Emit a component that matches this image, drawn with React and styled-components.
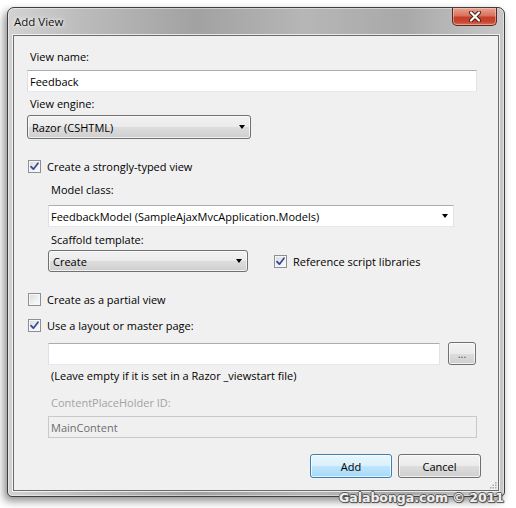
import React from "react";
import styled, { createGlobalStyle } from "styled-components";

const GlobalStyle = createGlobalStyle`
	html, body {
		margin: 0;
		padding: 0;
		background: #fff;
	}
	body {
		font-family: "Open Sans", "Noto Sans", sans-serif;
		font-size: 11px;
		color: #000;
	}
`;

const Stage = styled.div`
	position: relative;
	width: 516px;
	height: 508px;
	box-sizing: border-box;
	padding: 7px 0 0 7px;
	overflow: hidden;
`;

const Window = styled.div`
	width: 498px;
	height: 490px;
	box-sizing: border-box;
	display: flex;
	flex-direction: column;
	border: 1px solid #3f3f3f;
	border-radius: 7px 7px 5px 5px;
	background:
		linear-gradient(to right, rgba(255, 255, 255, 0.45) 0%, rgba(255, 255, 255, 0.15) 16%, rgba(0, 0, 0, 0.07) 38%, rgba(255, 255, 255, 0.1) 60%, rgba(0, 0, 0, 0.03) 80%, rgba(255, 255, 255, 0.32) 100%),
		#aeaeae;
	box-shadow:
		inset 0 0 0 1px rgba(255, 255, 255, 0.45),
		-3px 4px 8px rgba(0, 0, 0, 0.45);
`;

const TitleBar = styled.div`
	height: 27px;
	flex-shrink: 0;
	display: flex;
	justify-content: space-between;
	align-items: flex-start;
	padding: 0 7px 0 6px;
`;

const Title = styled.span`
	align-self: center;
	font-size: 11.5px;
	line-height: 16px;
	color: #111;
	text-shadow: 0 0 6px rgba(255, 255, 255, 0.9), 0 0 3px rgba(255, 255, 255, 0.9);
`;

const CloseButton = styled.div`
	width: 45px;
	height: 18px;
	box-sizing: border-box;
	display: flex;
	align-items: center;
	justify-content: center;
	border: 1px solid #5a2a22;
	border-top: none;
	border-radius: 0 0 5px 5px;
	background: linear-gradient(to bottom, #e8a493 0%, #d9725b 45%, #c4402a 55%, #c7442d 80%, #d7705a 100%);
	box-shadow: inset 0 0 0 1px rgba(255, 220, 210, 0.45);
`;

const Client = styled.div`
	position: relative;
	flex: 1;
	margin: 0 5px 5px;
	border: 1px solid #6c6c6c;
	box-shadow: 0 0 0 1px rgba(255, 255, 255, 0.75);
	background: #f0f0f0;
	padding: 13px 17px 0 13px;
	display: flex;
	flex-direction: column;
	align-items: flex-start;
`;

const Label = styled.div`
	margin-top: ${(p) => p.$gap || 0}px;
	padding-left: ${(p) => (p.$indent || 0) + 3}px;
	line-height: 16px;
	color: ${(p) => (p.$muted ? "#a3a3a3" : "#000")};
	white-space: nowrap;
`;

const TextBox = styled.div`
	position: relative;
	margin-top: ${(p) => p.$gap || 0}px;
	margin-left: ${(p) => p.$indent || 0}px;
	width: ${(p) => p.$w}px;
	height: 22px;
	box-sizing: border-box;
	display: flex;
	align-items: center;
	padding-left: 2px;
	border: 1px solid;
	border-color: ${(p) => (p.$disabled ? "#c9c9c9" : "#abadb3 #e2e3ea #e3e9ef #dbdfe6")};
	background: ${(p) => (p.$disabled ? "#f0f0f0" : "#fff")};
	color: ${(p) => (p.$disabled ? "#6d6d6d" : "#000")};
	white-space: nowrap;
`;

const DropDown = styled.div`
	position: relative;
	margin-top: ${(p) => p.$gap || 0}px;
	margin-left: ${(p) => p.$indent || 0}px;
	width: ${(p) => p.$w}px;
	height: ${(p) => p.$h || 22}px;
	box-sizing: border-box;
	display: flex;
	align-items: center;
	padding-left: 4px;
	border: 1px solid #707070;
	border-radius: 3px;
	background: linear-gradient(to bottom, #f2f2f2 0%, #ebebeb 50%, #dddddd 51%, #cfcfcf 100%);
	box-shadow: inset 0 0 0 1px rgba(255, 255, 255, 0.7);
	flex-shrink: 0;
`;

const Arrow = styled.span`
	position: absolute;
	right: 5px;
	top: 50%;
	margin-top: -2px;
	width: 0;
	height: 0;
	border-left: 3.5px solid transparent;
	border-right: 3.5px solid transparent;
	border-top: 4px solid #000;
`;

const CheckRow = styled.div`
	display: flex;
	align-items: center;
	gap: 6px;
	margin-top: ${(p) => p.$gap || 0}px;
	margin-left: ${(p) => p.$indent || 1}px;
	height: 16px;
	white-space: nowrap;
`;

const Box = styled.span`
	width: 13px;
	height: 13px;
	box-sizing: border-box;
	border: 1px solid #8e8f8f;
	background: linear-gradient(135deg, #d6d9de 0%, #f0f1f3 60%, #fbfbfb 100%);
	box-shadow: inset 0 0 0 1px #f7f7f7;
	display: flex;
	align-items: center;
	justify-content: center;
	flex-shrink: 0;
`;

const Row = styled.div`
	display: flex;
	align-items: center;
	margin-top: ${(p) => p.$gap || 0}px;
	margin-left: ${(p) => p.$indent || 0}px;
	gap: ${(p) => p.$spacing || 0}px;
`;

const ButtonRow = styled.div`
	align-self: flex-end;
	display: flex;
	gap: 6px;
	margin-top: 16px;
`;

const Button = styled.div`
	width: ${(p) => p.$w}px;
	height: ${(p) => p.$h || 24}px;
	box-sizing: border-box;
	display: flex;
	align-items: center;
	justify-content: center;
	border: 1px solid ${(p) => (p.$primary ? "#3c7fb1" : "#707070")};
	border-radius: 3px;
	background: ${(p) =>
		p.$primary
			? "linear-gradient(to bottom, #eaf6fd 0%, #d9f0fc 50%, #bee6fd 51%, #a7d9f5 100%)"
			: "linear-gradient(to bottom, #f2f2f2 0%, #ebebeb 50%, #dddddd 51%, #cfcfcf 100%)"};
	box-shadow: inset 0 0 0 1px rgba(255, 255, 255, 0.7);
	color: ${(p) => (p.$faint ? "#555" : "#000")};
	flex-shrink: 0;
`;

const Grip = styled.svg`
	position: absolute;
	right: 1px;
	bottom: 1px;
`;

const Watermark = styled.div`
	position: absolute;
	right: 12px;
	bottom: 2px;
	font-family: "DejaVu Sans", Verdana, sans-serif;
	font-weight: bold;
	font-size: 12.5px;
	line-height: 16px;
	color: #eeeeee;
	text-shadow:
		1px 0 0 #5a5a5a, -1px 0 0 #5a5a5a, 0 1px 0 #5a5a5a, 0 -1px 0 #5a5a5a,
		1px 1px 1px #444;
`;

function Check({ checked }) {
	return (
		<Box>
			{checked && (
				<svg width="9" height="9" viewBox="0 0 9 9">
					<path d="M1 4.6 L3.4 7.2 L8 1.2" fill="none" stroke="#34489a" strokeWidth="1.7" strokeLinejoin="round" strokeLinecap="round" />
				</svg>
			)}
		</Box>
	);
}

export default function App() {
	return (
		<>
			<GlobalStyle />
			<Stage>
				<Window>
					<TitleBar>
						<Title>Add View</Title>
						<CloseButton>
							<svg width="14" height="11" viewBox="0 0 14 11">
								<path d="M3 1.5 L11 9.5 M11 1.5 L3 9.5" stroke="#4a1a14" strokeWidth="4" strokeLinecap="round" />
								<path d="M3 1.5 L11 9.5 M11 1.5 L3 9.5" stroke="#fff" strokeWidth="2.2" strokeLinecap="round" />
							</svg>
						</CloseButton>
					</TitleBar>

					<Client>
						<Label>View name:</Label>
						<TextBox $gap={5} $w={450}>Feedback</TextBox>

						<Label $gap={4}>View engine:</Label>
						<DropDown $gap={3} $w={224} $h={24}>
							Razor (CSHTML)
							<Arrow />
						</DropDown>

						<CheckRow $gap={19}>
							<Check checked />
							Create a strongly-typed view
						</CheckRow>

						<Label $gap={8} $indent={21}>Model class:</Label>
						<TextBox $gap={7} $indent={21} $w={406}>
							FeedbackModel (SampleAjaxMvcApplication.Models)
							<Arrow />
						</TextBox>

						<Label $gap={5} $indent={21}>Scaffold template:</Label>
						<Row $gap={2} $indent={21} $spacing={25}>
							<DropDown $w={200}>
								Create
								<Arrow />
							</DropDown>
							<CheckRow $indent={0}>
								<Check checked />
								Reference script libraries
							</CheckRow>
						</Row>

						<CheckRow $gap={19}>
							<Check />
							Create as a partial view
						</CheckRow>
						<CheckRow $gap={10}>
							<Check checked />
							Use a layout or master page:
						</CheckRow>

						<Row $gap={9} $indent={21} $spacing={8}>
							<TextBox $w={392} />
							<Button $w={28} $h={23} $faint>
								...
							</Button>
						</Row>

						<Label $gap={3} $indent={21}>(Leave empty if it is set in a Razor _viewstart file)</Label>

						<Label $gap={11} $indent={21} $muted>
							ContentPlaceHolder ID:
						</Label>
						<TextBox $gap={5} $indent={21} $w={429} $disabled>
							MainContent
						</TextBox>

						<ButtonRow>
							<Button $w={82} $primary>
								Add
							</Button>
							<Button $w={83}>Cancel</Button>
						</ButtonRow>

						<Grip width="7" height="7" viewBox="0 0 7 7">
							{[
								[5, 0],
								[5, 2.5],
								[2.5, 2.5],
								[5, 5],
								[2.5, 5],
								[0, 5],
							].map(([x, y]) => (
								<rect key={`${x}-${y}`} x={x} y={y} width="1.5" height="1.5" fill="#a9a9a9" />
							))}
						</Grip>
					</Client>
				</Window>
				<Watermark>Galabonga.com © 2011</Watermark>
			</Stage>
		</>
	);
}
